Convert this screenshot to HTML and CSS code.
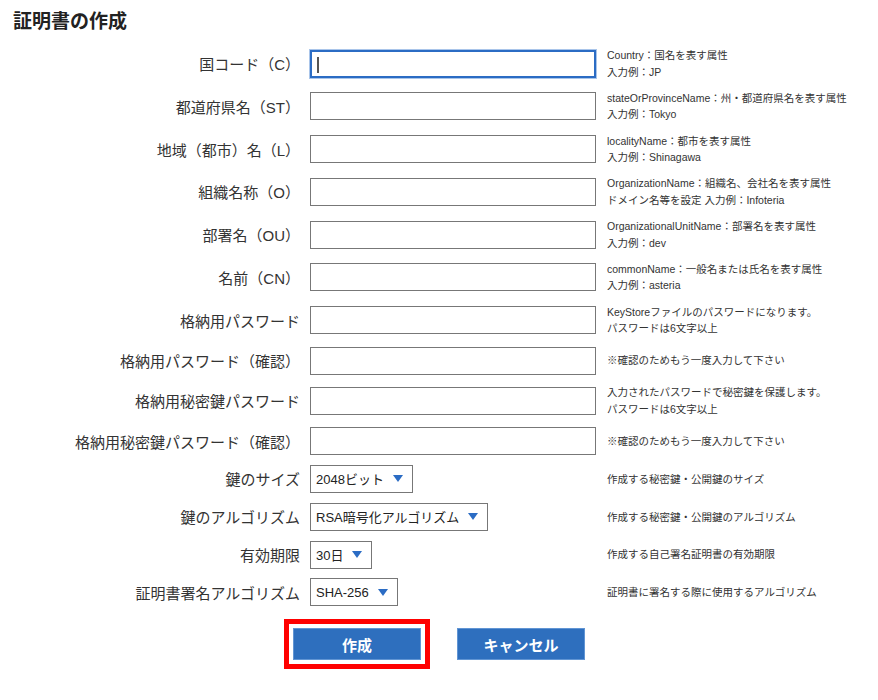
FILE: index.html
```html
<!DOCTYPE html>
<html lang="ja">

<head>
    <meta charset="UTF-8">
    <meta name="viewport" content="width=device-width, initial-scale=1.0">
    <title>証明書の作成</title>
    <link rel="stylesheet" href="styles.css">
</head>

<body>
    <h1 class="page-title">証明書の作成</h1>

    <form class="cert-form">
        <label class="field-label" for="country">国コード（C）</label>
        <div class="field-input has-caret">
            <input id="country" class="text-input is-focused" type="text">
            <span class="caret"></span>
        </div>
        <p class="field-desc">Country：国名を表す属性<br>入力例：JP</p>

        <label class="field-label" for="state">都道府県名（ST）</label>
        <div class="field-input"><input id="state" class="text-input" type="text"></div>
        <p class="field-desc">stateOrProvinceName：州・都道府県名を表す属性<br>入力例：Tokyo</p>

        <label class="field-label" for="locality">地域（都市）名（L）</label>
        <div class="field-input"><input id="locality" class="text-input" type="text"></div>
        <p class="field-desc">localityName：都市を表す属性<br>入力例：Shinagawa</p>

        <label class="field-label" for="org">組織名称（O）</label>
        <div class="field-input"><input id="org" class="text-input" type="text"></div>
        <p class="field-desc">OrganizationName：組織名、会社名を表す属性<br>ドメイン名等を設定 入力例：Infoteria</p>

        <label class="field-label" for="unit">部署名（OU）</label>
        <div class="field-input"><input id="unit" class="text-input" type="text"></div>
        <p class="field-desc">OrganizationalUnitName：部署名を表す属性<br>入力例：dev</p>

        <label class="field-label" for="cn">名前（CN）</label>
        <div class="field-input"><input id="cn" class="text-input" type="text"></div>
        <p class="field-desc">commonName：一般名または氏名を表す属性<br>入力例：asteria</p>

        <label class="field-label" for="store-pass">格納用パスワード</label>
        <div class="field-input"><input id="store-pass" class="text-input" type="password"></div>
        <p class="field-desc">KeyStoreファイルのパスワードになります。<br>パスワードは6文字以上</p>

        <label class="field-label" for="store-pass2">格納用パスワード（確認）</label>
        <div class="field-input"><input id="store-pass2" class="text-input" type="password"></div>
        <p class="field-desc">※確認のためもう一度入力して下さい</p>

        <label class="field-label" for="key-pass">格納用秘密鍵パスワード</label>
        <div class="field-input"><input id="key-pass" class="text-input" type="password"></div>
        <p class="field-desc">入力されたパスワードで秘密鍵を保護します。<br>パスワードは6文字以上</p>

        <label class="field-label" for="key-pass2">格納用秘密鍵パスワード（確認）</label>
        <div class="field-input"><input id="key-pass2" class="text-input" type="password"></div>
        <p class="field-desc">※確認のためもう一度入力して下さい</p>

        <span class="field-label">鍵のサイズ</span>
        <div class="field-input">
            <div class="select"><span>2048ビット</span><svg class="arrow" viewBox="0 0 10 7"><path d="M0 0H10L5 7Z"/></svg></div>
        </div>
        <p class="field-desc">作成する秘密鍵・公開鍵のサイズ</p>

        <span class="field-label">鍵のアルゴリズム</span>
        <div class="field-input">
            <div class="select"><span>RSA暗号化アルゴリズム</span><svg class="arrow" viewBox="0 0 10 7"><path d="M0 0H10L5 7Z"/></svg></div>
        </div>
        <p class="field-desc">作成する秘密鍵・公開鍵のアルゴリズム</p>

        <span class="field-label">有効期限</span>
        <div class="field-input">
            <div class="select"><span>30日</span><svg class="arrow" viewBox="0 0 10 7"><path d="M0 0H10L5 7Z"/></svg></div>
        </div>
        <p class="field-desc">作成する自己署名証明書の有効期限</p>

        <span class="field-label">証明書署名アルゴリズム</span>
        <div class="field-input">
            <div class="select"><span>SHA-256</span><svg class="arrow" viewBox="0 0 10 7"><path d="M0 0H10L5 7Z"/></svg></div>
        </div>
        <p class="field-desc">証明書に署名する際に使用するアルゴリズム</p>
    </form>

    <div class="actions">
        <button class="btn btn-marked" type="button">作成</button>
        <button class="btn" type="button">キャンセル</button>
    </div>
</body>

</html>
```

FILE: styles.css
```css
body {
    margin: 0;
    padding-bottom: 40px;
    font-family: "Liberation Sans", "Noto Sans CJK JP", sans-serif;
    color: #222;
    background: #fff;
}

.page-title {
    margin: 0;
    padding: 10px 13px 0;
    font-size: 19px;
    line-height: 24px;
    font-weight: bold;
}

.cert-form {
    display: grid;
    grid-template-columns: 300px 286px 1fr;
    column-gap: 10px;
    row-gap: 9.8px;
    align-items: center;
    margin-top: 13px;
}

.field-label {
    text-align: right;
    font-size: 15px;
    color: #333;
}

.field-input {
    position: relative;
}

.text-input {
    display: block;
    width: 286px;
    height: 28px;
    box-sizing: border-box;
    margin: 0;
    border: 1px solid #777;
    background: #fff;
    outline: none;
}

.text-input.is-focused {
    border: 2px solid #2b6cc4;
    box-shadow: 0 0 0 1px #a9c5ea;
}

.caret {
    position: absolute;
    left: 7px;
    top: 7px;
    width: 2px;
    height: 16px;
    background: #555;
}

.field-desc {
    margin: 0;
    padding-left: 1px;
    font-size: 10.5px;
    line-height: 16.5px;
    color: #333;
}

.select {
    display: inline-flex;
    align-items: center;
    gap: 9px;
    height: 28px;
    box-sizing: border-box;
    padding: 0 9px 0 5px;
    border: 1px solid #777;
    font-size: 13px;
    color: #222;
}

.arrow {
    width: 10px;
    height: 7px;
    fill: #2b6cc4;
}

.actions {
    display: flex;
    justify-content: center;
    gap: 36px;
    margin-top: 22px;
}

.btn {
    width: 128px;
    height: 32px;
    border: 1px solid #6195d4;
    background: #2e6fbe;
    color: #fff;
    font-family: inherit;
    font-size: 15px;
    font-weight: bold;
    cursor: pointer;
}

.btn-marked {
    outline: 5px solid #f00;
    outline-offset: 4px;
}
```
